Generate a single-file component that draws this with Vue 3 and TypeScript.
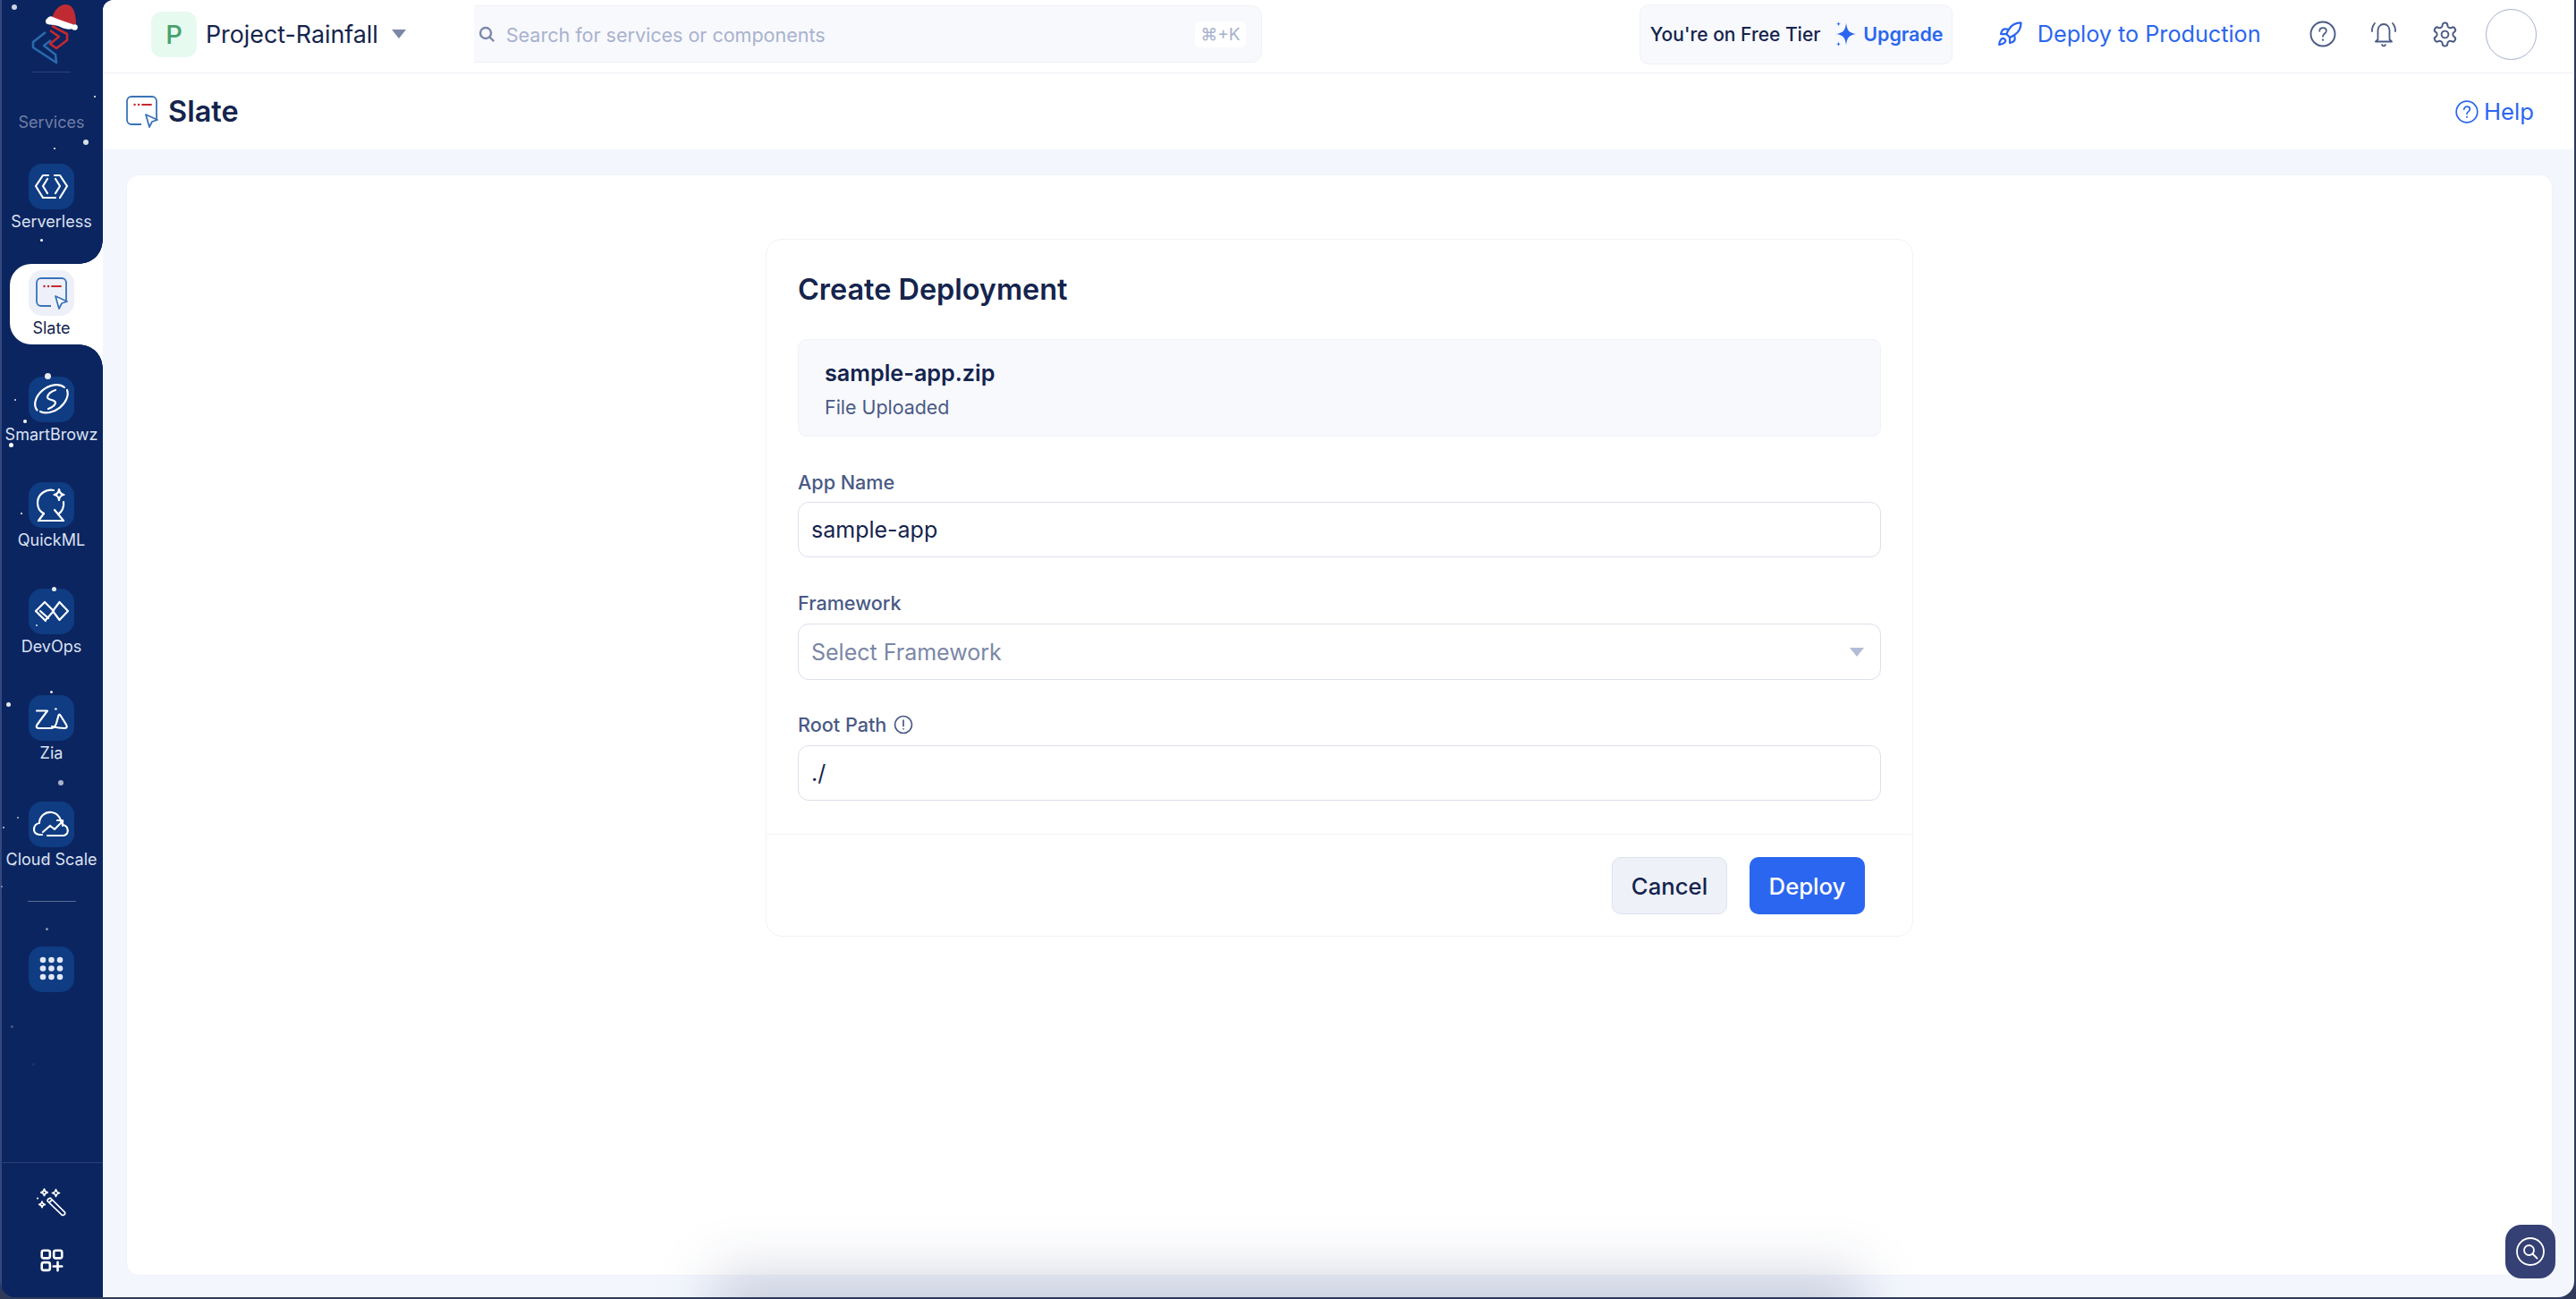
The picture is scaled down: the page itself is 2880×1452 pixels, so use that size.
<script setup lang="ts">
interface NavItem { label: string; paths: string[] }
const navItems: NavItem[] = [
  { label: 'Serverless', paths: ['M22 13h-6L8 25l8 13h14', 'M21 17l-5 8 5 8', 'M29 13h6l8 12-8 13', 'M30 17l5 8-5 8'] },
  { label: 'Slate', paths: [] },
  { label: 'SmartBrowz', paths: ['M9.500 37.500A20 14 -35 0 1 40 12', 'M43 15A20 14 -35 0 1 13 39', 'M30 15c-5 1.500-9 5-9 8 0 3.500 9 2.500 9 6 0 3-4 5.500-8 7'] },
  { label: 'QuickML', paths: ['M28 9C20 7 10 13 10 23c0 6 3 10 7 12', 'M39 22c1 6-2 11-5 13', 'M11 43l6-8M39 43l-10-12', 'M11 43h28', 'M34 8c.6 4 2 5.600 5.500 6-3.500.6-5 2-5.500 6-.5-4-2-5.400-5.500-6 3.500-.4 5-2 5.500-6z'] },
  { label: 'DevOps', paths: ['M8 25l10-10 10 10-9 10', 'M8 25l4.500 4.500', 'M13 25l9 8M11.500 28.500l7.500 7.500', 'M34.500 15l9.500 10-9.500 10-7.500-10z'] },
  { label: 'Zia', paths: ['M9 17.500h12L9.500 33c-1.500 2.500-.5 4 2 4h14c3 0 4.500-2.500 5.500-5.500l2.500-9c.4-1.300 1.300-1.300 2 0l6.500 10.500c1.500 2.500.5 4-2 4-5 0-10-1-14-2', 'M30 15.500h.8'] },
  { label: 'Cloud Scale', paths: ['M15 37h-3c-9-1-7-12 0-13 0-7 6-13 14-12 6 1 9 5 10 10', 'M33 38h6c7-1 6-11-1-12', 'M16 34l8-7 5 4 9-9M32 21h6v6', 'M21 38h14'] },
]

const snow: number[][] = [
  [16, 8, 3, 0.8], [106, 108, 1, 1], [96, 159, 3, 0.85], [61, 166, 1, 1], [46, 268, 1.5, 1],
  [53, 420, 3.5, 0.9], [17, 447, 1, 0.9], [28, 471, 2, 1], [12, 497, 2.5, 1], [24, 574, 1, 1],
  [60, 658, 2.5, 0.9], [41, 699, 1, 0.9], [57, 773, 1.5, 0.9], [9, 787, 2.5, 0.9], [68, 875, 3, 0.65],
  [20, 914, 1, 0.7], [4, 925, 1, 0.8], [16, 966, 2, 0.35], [50, 961, 2, 0.3], [2, 991, 1, 0.5],
  [52, 1038, 1.5, 0.5], [13, 1147, 1.5, 0.25], [37, 1189, 1.5, 0.08],
]

function dotStyle(d: number[]) {
  return { left: `${d[0] - d[2]}px`, top: `${d[1] - d[2]}px`, width: `${d[2] * 2}px`, height: `${d[2] * 2}px`, opacity: d[3] }
}
</script>

<template>
  <div class="screen">
    <div class="window">
      <aside class="sidebar">
        <div class="brand">
          <svg class="logo" viewBox="0 0 90 85" width="90" height="85" fill="none">
            <path d="M31 36 17 47v6l26 17-1-9-13-10 8-6" stroke="#2a69ae" stroke-width="2.600" stroke-linejoin="round" />
            <path d="M38 29l17 9v7L43 54l-7-5 10-8-10-7" stroke="#c7282f" stroke-width="2.600" stroke-linejoin="round" />
            <path d="M38 22C40 10 48 5 53 5c8 0 12 7 12 23L48 24z" fill="#c02b33" />
            <path d="M31 23c2-4 6-6 8-4 6 3 14 5 22 8 2 1 3 4 1 5-8 2-12-1-17-3-6-2-15 0-14-6z" fill="#fff" />
            <circle cx="63.500" cy="30.500" r="3.300" fill="#fff" />
          </svg>
        </div>
        <div class="services">Services</div>
        <nav class="nav">
          <div v-for="item in navItems" :key="item.label" class="nav-item" :class="{ active: item.label === 'Slate' }">
            <span v-if="item.label === 'Slate'" class="pill" />
            <div class="tile">
              <svg v-if="item.label === 'Slate'" viewBox="0 0 51 51" width="51" height="51" fill="none">
                <path d="M25 40H14a5 5 0 0 1-5-5V14a5 5 0 0 1 5-5h23a5 5 0 0 1 5 5v20" stroke="#3a73b8" stroke-width="1.800" />
                <path d="M17.500 18h.1M22 18h.1" stroke="#c7282f" stroke-width="2.400" stroke-linecap="round" />
                <path d="M26 18h10" stroke="#c7282f" stroke-width="1.800" stroke-linecap="round" />
                <path d="M30 29l13 6-6 2-3 6z" fill="#fff" stroke="#3a73b8" stroke-width="1.800" stroke-linejoin="round" />
              </svg>
              <svg v-else viewBox="0 0 51 51" width="51" height="51" fill="none" stroke="#fff" stroke-width="2.200" stroke-linecap="round" stroke-linejoin="round">
                <path v-for="p in item.paths" :key="p" :d="p" />
              </svg>
            </div>
            <div class="nav-label">{{ item.label }}</div>
          </div>
        </nav>
        <div class="rule" />
        <div class="tile apps">
          <svg viewBox="0 0 51 51" width="51" height="51" fill="#e1e7f6">
            <circle v-for="c in [[16,15],[25.500,15],[35,15],[16,24.500],[25.500,24.500],[35,24.500],[16,34],[25.500,34],[35,34]]" :key="c.join()" :cx="c[0]" :cy="c[1]" r="3.300" />
          </svg>
        </div>
        <div class="side-foot">
          <svg viewBox="0 0 34 34" width="34" height="34" fill="none" stroke="#fff" stroke-width="1.700" stroke-linejoin="round">
            <path d="M12.500 12.500l2.800-1.500 16 15.800c1 1 .5 2.500-.9 3.300-1 .5-1.900.2-2.400-.3L12 14.500z" />
            <path d="M14 16l3-2.500" />
            <path d="M8.500 1c.4 2.500 1.300 3.400 3.700 3.800-2.400.4-3.300 1.300-3.700 3.700-.4-2.400-1.300-3.300-3.700-3.700C7.200 4.400 8.100 3.500 8.500 1z" />
            <path d="M21.500 1.500c.4 2.700 1.300 3.600 4 4-2.700.4-3.600 1.300-4 4-.4-2.700-1.300-3.600-4-4 2.700-.4 3.600-1.300 4-4z" />
            <path d="M6 15c.3 2.200 1.100 3 3.300 3.300C7.100 18.600 6.300 19.400 6 21.600c-.3-2.200-1.100-3-3.300-3.300C4.900 18 5.700 17.200 6 15z" />
            <path d="M1 11.500h.1" stroke-width="2" stroke-linecap="round" />
          </svg>
          <svg viewBox="0 0 30 30" width="26" height="26" fill="none" stroke="#fff" stroke-width="3" stroke-linejoin="round" stroke-linecap="round">
            <rect x="2" y="2" width="10.500" height="10" rx="2.500" />
            <rect x="17.500" y="2" width="10.500" height="10" rx="2.500" />
            <rect x="2" y="17.500" width="10.500" height="10" rx="2.500" />
            <path d="M17 22.500h11M22.500 17v11" />
          </svg>
        </div>
        <i v-for="d in snow" :key="d.join()" class="flake" :style="dotStyle(d)" />
      </aside>

      <main class="main">
        <header class="topbar">
          <div class="project-mark">P</div>
          <div class="project-name">Project-Rainfall</div>
          <i class="caret" />
          <div class="search">
            <svg viewBox="0 0 18 18" width="18" height="18" fill="none" stroke="#7b87a8" stroke-width="2.400" stroke-linecap="round">
              <circle cx="8" cy="8" r="6" />
              <path d="M12.500 12.500l4 4" />
            </svg>
            <span class="search-text">Search for services or components</span>
            <kbd class="shortcut">⌘+K</kbd>
          </div>
          <div class="tier">
            <span>You're on Free Tier</span>
            <svg viewBox="0 0 24 30" width="24" height="30" fill="#2b66f0">
              <path d="M13 2.500c1 8.500 3 11 11 12.500-8 1.500-10 4-11 12.500C12 19 10 16.500 2 15c8-1.500 10-4 11-12.500z" />
              <path d="M4.500 1c.3 2 .8 2.500 2.500 2.800C5.300 4 4.800 4.600 4.500 6.500 4.200 4.600 3.700 4 2 3.800 3.700 3.500 4.200 3 4.500 1zM4.500 23.500c.3 2 .8 2.500 2.500 2.800-1.700.2-2.200.8-2.500 2.700-.3-1.900-.8-2.500-2.500-2.700 1.700-.3 2.200-.8 2.500-2.800z" />
            </svg>
            <b>Upgrade</b>
          </div>
          <svg class="rocket" viewBox="0 0 24 24" width="30" height="30" fill="none" stroke="#2b66f0" stroke-width="1.800" stroke-linecap="round" stroke-linejoin="round">
            <path d="M4.500 16.500c-1.500 1.260-2 5-2 5s3.740-.5 5-2c.71-.84.7-2.130-.09-2.910a2.180 2.180 0 0 0-2.910-.09z" />
            <path d="m12 15-3-3a22 22 0 0 1 2-3.950A12.880 12.880 0 0 1 22 2c0 2.720-.78 7.500-6 11a22.350 22.350 0 0 1-4 2z" />
            <path d="M9 12H4s.55-3.030 2-4c1.620-1.080 5 0 5 0" />
            <path d="M12 15v5s3.030-.55 4-2c1.080-1.620 0-5 0-5" />
          </svg>
          <span class="deploy-link">Deploy to Production</span>
          <svg class="tool first" viewBox="0 0 30 30" width="30" height="30" fill="none" stroke="#4a5a85" stroke-width="1.900" stroke-linecap="round">
            <circle cx="15" cy="15" r="13.500" />
            <path d="M11.300 11.800c0-2.200 1.700-3.600 3.800-3.600s3.800 1.400 3.800 3.300c0 3-3.900 3-3.900 6.300" stroke-width="1.700" />
            <path d="M15 21.700h.1" stroke-width="2.200" />
          </svg>
          <svg class="tool" viewBox="0 0 30 32" width="30" height="32" fill="none" stroke="#4a5a85" stroke-width="1.800" stroke-linecap="round" stroke-linejoin="round">
            <path d="M8.500 22V12c0-4 2.800-7 6.500-7s6.500 3 6.500 7v10l2.500 2.500H6z" />
            <path d="M13 28c.5 1.700 3.500 1.700 4 0" />
            <path d="M5 4C2.500 7 1.800 10 2 13M25 4c2.500 3 3.200 6 3 9" />
          </svg>
          <svg class="tool" viewBox="0 0 24 24" width="31" height="31" fill="none" stroke="#4a5a85" stroke-width="1.500" stroke-linecap="round" stroke-linejoin="round">
            <path d="M12.220 2h-.44a2 2 0 0 0-2 2v.18a2 2 0 0 1-1 1.730l-.43.25a2 2 0 0 1-2 0l-.15-.08a2 2 0 0 0-2.730.73l-.22.38a2 2 0 0 0 .73 2.730l.15.1a2 2 0 0 1 1 1.720v.51a2 2 0 0 1-1 1.740l-.15.09a2 2 0 0 0-.73 2.730l.22.38a2 2 0 0 0 2.730.73l.15-.08a2 2 0 0 1 2 0l.43.25a2 2 0 0 1 1 1.730V20a2 2 0 0 0 2 2h.44a2 2 0 0 0 2-2v-.18a2 2 0 0 1 1-1.730l.43-.25a2 2 0 0 1 2 0l.15.08a2 2 0 0 0 2.730-.73l.22-.39a2 2 0 0 0-.73-2.730l-.15-.08a2 2 0 0 1-1-1.740v-.5a2 2 0 0 1 1-1.740l.15-.09a2 2 0 0 0 .73-2.730l-.22-.38a2 2 0 0 0-2.730-.73l-.15.08a2 2 0 0 1-2 0l-.43-.25a2 2 0 0 1-1-1.730V4a2 2 0 0 0-2-2z" />
            <circle cx="12" cy="12" r="3" />
          </svg>
          <div class="avatar" />
        </header>

        <div class="titlebar">
          <svg viewBox="8 8 36 36" width="36" height="36" fill="none">
            <path d="M25 40H14a5 5 0 0 1-5-5V14a5 5 0 0 1 5-5h23a5 5 0 0 1 5 5v20" stroke="#3a73b8" stroke-width="1.800" />
            <path d="M17.500 18h.1M22 18h.1" stroke="#c7282f" stroke-width="2.400" stroke-linecap="round" />
            <path d="M26 18h10" stroke="#c7282f" stroke-width="1.800" stroke-linecap="round" />
            <path d="M30 29l13 6-6 2-3 6z" fill="#fff" stroke="#3a73b8" stroke-width="1.800" stroke-linejoin="round" />
          </svg>
          <h1 class="page-title">Slate</h1>
          <div class="help">
            <svg viewBox="0 0 26 26" width="26" height="26" fill="none" stroke="#2b66f0" stroke-width="1.700" stroke-linecap="round">
              <circle cx="13" cy="13" r="11.800" />
              <path d="M9.800 10.300c0-1.900 1.500-3.100 3.300-3.100s3.300 1.200 3.300 2.900c0 2.600-3.400 2.600-3.400 5.400" />
              <path d="M13 18.800h.1" stroke-width="2" />
            </svg>
            <span>Help</span>
          </div>
        </div>

        <div class="content">
          <section class="modal">
            <div class="modal-body">
              <h2 class="modal-title">Create Deployment</h2>
              <div class="file-box">
                <div class="file-name">sample-app.zip</div>
                <div class="file-status">File Uploaded</div>
              </div>
              <div class="field first">
                <label class="field-label">App Name</label>
                <div class="input">sample-app</div>
              </div>
              <div class="field">
                <label class="field-label">Framework</label>
                <div class="input select">
                  <span class="placeholder">Select Framework</span>
                  <i class="select-caret" />
                </div>
              </div>
              <div class="field root">
                <label class="field-label">
                  Root Path
                  <svg viewBox="0 0 22 22" width="22" height="22" fill="none" stroke="#4a5a85" stroke-width="1.700" stroke-linecap="round">
                    <circle cx="11" cy="11" r="9.500" />
                    <path d="M11 6v6.500M11 15.800h.1" />
                  </svg>
                </label>
                <div class="input">./</div>
              </div>
            </div>
            <div class="modal-foot">
              <button class="btn cancel" type="button">Cancel</button>
              <button class="btn deploy" type="button">Deploy</button>
            </div>
          </section>
        </div>
      </main>
    </div>
    <div class="dock-shadow" />
    <button class="finder" type="button" aria-label="Search">
      <svg viewBox="0 0 34 34" width="34" height="34" fill="none" stroke="#fff" stroke-width="1.800" stroke-linecap="round">
        <circle cx="17" cy="17" r="15" />
        <circle cx="15.500" cy="15.500" r="5.500" />
        <path d="M19.500 19.500l5 5" />
      </svg>
    </button>
  </div>
</template>

<style>
html, body { margin: 0; padding: 0; background: #2f3a5a; }
</style>

<style scoped>
.screen {
  position: relative;
  width: 2880px;
  height: 1452px;
  overflow: hidden;
  background: #2f3a5a;
  font-family: Inter, "Noto Sans", sans-serif;
  color: #101f45;
}
.window {
  display: flex;
  width: 2878px;
  height: 1450px;
  overflow: hidden;
  background: #0b2560;
  border-radius: 0 0 18px 18px;
}
.sidebar {
  position: relative;
  flex: 0 0 115px;
  display: flex;
  flex-direction: column;
  box-sizing: border-box;
  border-left: 2px solid #35477f;
  background: #0b2560;
}
.brand {
  height: 81px;
  margin-left: -2px;
  position: relative;
  flex: none;
}
.brand::after {
  content: "";
  position: absolute;
  left: 36px;
  top: 80px;
  width: 43px;
  height: 1px;
  background: #2d4379;
}
.logo {
  position: absolute;
  left: 20px;
  top: 0;
}
.services {
  flex: none;
  margin: 46px 0 0 -2px;
  text-align: center;
  font-size: 18px;
  line-height: 20px;
  color: #6f7ea6;
}
.nav {
  flex: none;
  margin-top: 36px;
  display: flex;
  flex-direction: column;
}
.nav-item {
  position: relative;
  height: 118.800px;
  display: flex;
  flex-direction: column;
  align-items: center;
  margin-left: -2px;
}
.pill {
  position: absolute;
  left: 11px;
  right: 0;
  top: -7px;
  height: 90px;
  background: #fff;
  border-radius: 24px 0 0 24px;
}
.pill::before,
.pill::after {
  content: "";
  position: absolute;
  right: 0;
  width: 26px;
  height: 26px;
}
.pill::before {
  bottom: 100%;
  background: radial-gradient(circle at 0 0, transparent 25.500px, #fff 26px);
}
.pill::after {
  top: 100%;
  background: radial-gradient(circle at 0 100%, transparent 25.500px, #fff 26px);
}
.tile {
  position: relative;
  width: 51px;
  height: 51px;
  flex: none;
  border-radius: 15px;
  background: #0f3c82;
}
.tile svg {
  display: block;
}
.active .tile {
  background: #edf0f8;
}
.nav-label {
  position: relative;
  margin-top: 5px;
  font-size: 18px;
  line-height: 18px;
  white-space: nowrap;
  color: #dbe2f3;
}
.active .nav-label {
  color: #14244d;
}
.rule {
  flex: none;
  width: 54px;
  height: 1px;
  margin: -8px 0 0 29px;
  background: #5a6a92;
}
.apps {
  margin: 50px 0 0 30px;
}
.side-foot {
  margin-top: auto;
  height: 151px;
  margin-left: -2px;
  border-top: 1px solid #2a3f77;
  display: flex;
  flex-direction: column;
  align-items: center;
  box-sizing: border-box;
  padding-top: 28px;
  gap: 34px;
}
.flake {
  position: absolute;
  margin-left: -2px;
  border-radius: 50%;
  background: #fff;
  pointer-events: none;
}
.main {
  flex: 1;
  min-width: 0;
  display: flex;
  flex-direction: column;
  background: #f3f6fd;
  border-top-left-radius: 12px;
  overflow: hidden;
}
.topbar {
  flex: none;
  height: 82px;
  box-sizing: border-box;
  display: flex;
  align-items: center;
  padding: 0 0 5px 54px;
  background: #fff;
  border-bottom: 1px solid #eef0f6;
}
.project-mark {
  width: 51px;
  height: 51px;
  border-radius: 12px;
  background: #e6faf0;
  color: #4aa06c;
  font-size: 29px;
  font-weight: 500;
  line-height: 51px;
  text-align: center;
}
.project-name {
  margin-left: 10px;
  font-size: 26.800px;
  white-space: nowrap;
  color: #14244d;
}
.caret {
  margin-left: 15px;
  width: 0;
  height: 0;
  border-left: 8px solid transparent;
  border-right: 8px solid transparent;
  border-top: 10px solid #7b87a8;
}
.search {
  margin-left: 76px;
  width: 881px;
  height: 64px;
  box-sizing: border-box;
  display: flex;
  align-items: center;
  padding: 0 17px 0 5px;
  background: #f8f9fd;
  border: 1px solid #eef1f7;
  border-left: 0;
  border-radius: 0 12px 12px 0;
}
.search-text {
  margin-left: 13px;
  padding-top: 2px;
  font-size: 21.500px;
  color: #a8b2cf;
}
.shortcut {
  margin-left: auto;
  width: 57px;
  height: 29px;
  border-radius: 6px;
  background: #fff;
  font-family: "Inter", "DejaVu Sans", sans-serif;
  font-size: 19px;
  line-height: 29px;
  text-align: center;
  color: #a8b2cf;
}
.tier {
  margin-left: 422px;
  width: 350px;
  height: 67px;
  box-sizing: border-box;
  display: flex;
  align-items: center;
  padding-left: 11px;
  gap: 16px;
  background: #f8f9fd;
  border: 1px solid #f0f2f8;
  border-radius: 10px;
  font-size: 21px;
  font-weight: 500;
  white-space: nowrap;
  color: #14244d;
}
.tier b {
  margin-left: -8px;
  font-size: 21.400px;
  font-weight: 600;
  color: #2b66f0;
}
.rocket {
  margin-left: 49px;
}
.deploy-link {
  margin-left: 16px;
  font-size: 25.200px;
  white-space: nowrap;
  color: #2b66f0;
}
.tool {
  margin-left: 38px;
}
.tool.first {
  margin-left: 54px;
}
.avatar {
  margin-left: 30px;
  width: 57px;
  height: 57px;
  box-sizing: border-box;
  border: 1.500px solid #a8b2cf;
  border-radius: 50%;
}
.titlebar {
  flex: none;
  height: 85px;
  box-sizing: border-box;
  display: flex;
  align-items: center;
  padding: 0 45px 0 26px;
  background: #fff;
}
.page-title {
  margin: 0 0 0 11px;
  font-size: 32.500px;
  font-weight: 600;
  color: #14244d;
}
.help {
  margin-left: auto;
  display: flex;
  align-items: center;
  gap: 6px;
  font-size: 25.700px;
  color: #2b66f0;
}
.content {
  flex: 1;
  margin: 28px 24px 24px 26px;
  box-sizing: border-box;
  padding-top: 72px;
  background: #fff;
  border-radius: 14px;
  border: 1px solid #f0f3fa;
}
.modal {
  width: 1283px;
  height: 780px;
  box-sizing: border-box;
  margin: -1px auto 0;
  display: flex;
  flex-direction: column;
  background: #fff;
  border: 1.500px solid #f1f3f8;
  border-radius: 18px;
}
.modal-body {
  flex: none;
  height: 665px;
  box-sizing: border-box;
  padding: 36px 35px 0;
  border-bottom: 1.500px solid #f1f3f8;
}
.modal-title {
  margin: 0;
  font-size: 32.400px;
  line-height: 40px;
  font-weight: 600;
  color: #14244d;
}
.file-box {
  margin-top: 35px;
  height: 109px;
  box-sizing: border-box;
  padding: 20px 29px 0;
  background: #f8f9fd;
  border: 1px solid #f0f2f8;
  border-radius: 10px;
}
.file-name {
  font-size: 25.200px;
  line-height: 34px;
  font-weight: 600;
  color: #14244d;
}
.file-status {
  margin-top: 6px;
  font-size: 21.400px;
  line-height: 30px;
  color: #4a5a85;
}
.field {
  margin-top: 38px;
}
.field.first .input {
  margin-top: 9px;
}
.field.root {
  margin-top: 37px;
}
.field-label {
  display: flex;
  align-items: center;
  gap: 8px;
  height: 26px;
  font-size: 21.600px;
  line-height: 26px;
  font-weight: 500;
  color: #4a5a85;
}
.input {
  margin-top: 10px;
  height: 62px;
  box-sizing: border-box;
  display: flex;
  align-items: center;
  padding: 0 14px;
  background: #fff;
  border: 1.500px solid #dde0ec;
  border-radius: 12px;
  font-size: 25px;
  color: #14244d;
}
.select {
  height: 63px;
  justify-content: space-between;
}
.placeholder {
  color: #7b87a8;
}
.select-caret {
  margin-right: 4px;
  width: 0;
  height: 0;
  border-left: 8px solid transparent;
  border-right: 8px solid transparent;
  border-top: 10px solid #b3bcd5;
}
.modal-foot {
  flex: 1;
  display: flex;
  justify-content: flex-end;
  align-items: flex-start;
  gap: 25px;
  padding: 25px 53px 0 0;
}
.btn {
  width: 129px;
  height: 64px;
  box-sizing: border-box;
  border-radius: 10px;
  font-family: inherit;
  font-size: 25.700px;
  font-weight: 500;
}
.cancel {
  background: #eff1f9;
  border: 1.500px solid #dfe2ed;
  color: #14244d;
}
.deploy {
  background: #2b66f0;
  border: 0;
  color: #fff;
}
.dock-shadow {
  position: absolute;
  left: 800px;
  top: 1425px;
  width: 1280px;
  height: 80px;
  background: rgba(20, 35, 90, 0.2);
  filter: blur(32px);
  pointer-events: none;
}
.finder {
  position: absolute;
  left: 2801px;
  top: 1369px;
  width: 56px;
  height: 60px;
  display: flex;
  align-items: center;
  justify-content: center;
  padding: 0;
  border: 0;
  border-radius: 18px;
  background: #354074;
}
</style>
